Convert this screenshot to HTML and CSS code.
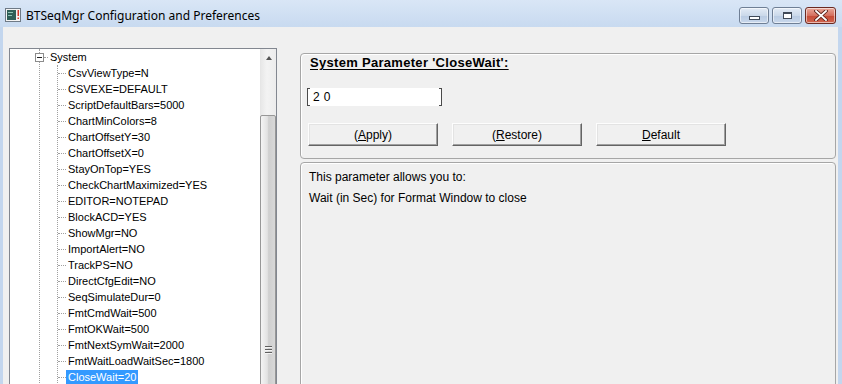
FILE: index.html
```html
<!DOCTYPE html>
<html lang="en">
<head>
  <meta charset="UTF-8" />
  <title>BTSeqMgr Configuration and Preferences</title>
  <link rel="stylesheet" href="styles.css">
</head>
<body>
  <div id="window">
    <div id="titlebar">
      <svg class="app-icon" width="16" height="14" viewBox="0 0 16 14">
        <rect x="0.5" y="0.5" width="15" height="13" fill="#f4f4f4" stroke="#6f7a86"/>
        <rect x="2" y="2" width="9" height="10" fill="#2f5e56"/>
        <rect x="3" y="4" width="5" height="1" fill="#8fc4b4"/>
        <rect x="3" y="7" width="4" height="1" fill="#8fc4b4"/>
        <rect x="12.5" y="2" width="1.5" height="6" fill="#d23a2a"/>
        <rect x="12.5" y="9.5" width="1.5" height="1.5" fill="#d23a2a"/>
      </svg>
      <span class="title">BTSeqMgr Configuration and Preferences</span>
      <div class="caption-buttons">
        <div class="cap-btn min"><span class="glyph-min"></span></div>
        <div class="cap-btn max"><span class="glyph-max"></span></div>
        <div class="cap-btn close">
          <svg width="14" height="11" viewBox="0 0 14 11">
            <path d="M2 1 L12 10 M12 1 L2 10" stroke="#5a2018" stroke-width="3.6" stroke-linecap="square"/>
            <path d="M2 1 L12 10 M12 1 L2 10" stroke="#ffffff" stroke-width="1.8" stroke-linecap="square"/>
          </svg>
        </div>
      </div>
    </div>

    <div id="client">
      <div id="tree-box">
        <div class="tree-area">
          <ul class="tree">
            <li>
              <div class="row"><span class="expander"></span><span class="hline short"></span><span class="label">System</span></div>
              <ul class="children">
                <li class="row"><span class="hline"></span><span class="label">CsvViewType=N</span></li>
                <li class="row"><span class="hline"></span><span class="label">CSVEXE=DEFAULT</span></li>
                <li class="row"><span class="hline"></span><span class="label">ScriptDefaultBars=5000</span></li>
                <li class="row"><span class="hline"></span><span class="label">ChartMinColors=8</span></li>
                <li class="row"><span class="hline"></span><span class="label">ChartOffsetY=30</span></li>
                <li class="row"><span class="hline"></span><span class="label">ChartOffsetX=0</span></li>
                <li class="row"><span class="hline"></span><span class="label">StayOnTop=YES</span></li>
                <li class="row"><span class="hline"></span><span class="label">CheckChartMaximized=YES</span></li>
                <li class="row"><span class="hline"></span><span class="label">EDITOR=NOTEPAD</span></li>
                <li class="row"><span class="hline"></span><span class="label">BlockACD=YES</span></li>
                <li class="row"><span class="hline"></span><span class="label">ShowMgr=NO</span></li>
                <li class="row"><span class="hline"></span><span class="label">ImportAlert=NO</span></li>
                <li class="row"><span class="hline"></span><span class="label">TrackPS=NO</span></li>
                <li class="row"><span class="hline"></span><span class="label">DirectCfgEdit=NO</span></li>
                <li class="row"><span class="hline"></span><span class="label">SeqSimulateDur=0</span></li>
                <li class="row"><span class="hline"></span><span class="label">FmtCmdWait=500</span></li>
                <li class="row"><span class="hline"></span><span class="label">FmtOKWait=500</span></li>
                <li class="row"><span class="hline"></span><span class="label">FmtNextSymWait=2000</span></li>
                <li class="row"><span class="hline"></span><span class="label">FmtWaitLoadWaitSec=1800</span></li>
                <li class="row"><span class="hline"></span><span class="label selected">CloseWait=20</span></li>
              </ul>
            </li>
          </ul>
        </div>
        <div class="vscroll">
          <div class="arrow-up"></div>
          <div class="track"></div>
          <div class="thumb"><span class="grip"></span></div>
        </div>
      </div>

      <div id="right">
        <div class="group param-group">
          <div class="param-title">System Parameter 'CloseWait':</div>
          <div class="value-box">20</div>
          <div class="buttons">
            <button>(<u>A</u>pply)</button>
            <button>(<u>R</u>estore)</button>
            <button><u>D</u>efault</button>
          </div>
        </div>
        <div class="group desc-group">
          <p>This parameter allows you to:</p>
          <p>Wait (in Sec) for Format Window to close</p>
        </div>
      </div>
    </div>
  </div>
</body>
</html>
```

FILE: styles.css
```css
html, body {
  margin: 0;
  padding: 0;
  width: 842px;
  height: 384px;
  overflow: hidden;
}

body {
  font-family: "Liberation Sans", Arial, sans-serif;
  font-size: 12px;
  color: #000;
  background-color: #c3d6ee;
}

#window {
  display: flex;
  flex-direction: column;
  height: 100%;
}

/* title bar */
#titlebar {
  height: 27px;
  display: flex;
  align-items: center;
  padding: 0 6px 0 5px;
  background: linear-gradient(#d9e6f6, #c8daf0);
  flex-shrink: 0;
}

.app-icon {
  margin-top: 3px;
}

.title {
  font-family: "Noto Sans", "Open Sans", sans-serif;
  font-size: 12px;
  color: #000;
  margin-left: 5px;
  margin-top: 3px;
}

.caption-buttons {
  margin-left: auto;
  display: flex;
  gap: 3px;
  align-self: flex-start;
  margin-top: 7px;
}

.cap-btn {
  width: 28px;
  height: 15px;
  border: 1px solid #6f7f95;
  border-radius: 3px;
  background: linear-gradient(#e4ecf6, #cbd9ea 50%, #b9cbe2 51%, #c9d8ec);
  display: flex;
  align-items: center;
  justify-content: center;
  box-shadow: inset 0 0 0 1px rgba(255, 255, 255, 0.55);
}

.cap-btn.close {
  width: 29px;
  border-color: #6b2a22;
  background: linear-gradient(#e9a99b, #d5705f 50%, #c54a36 51%, #d0654f);
}

.glyph-min {
  width: 9px;
  height: 2px;
  margin-top: 5px;
  background: #fff;
  border: 1px solid #404a58;
}

.glyph-max {
  width: 7px;
  height: 4px;
  border: 1px solid #404a58;
  border-top-width: 2px;
  background: #fff;
  box-shadow: inset 0 0 0 1px #fff;
}

/* client area */
#client {
  flex: 1;
  display: flex;
  align-items: flex-start;
  margin: 0 4px 0 3px;
  background-color: #f0f0f0;
  overflow: hidden;
}

#tree-box {
  margin: 21px 0 0 6px;
  width: 266px;
  height: 360px;
  border: 1px solid #828790;
  background: #fff;
  display: flex;
  flex-shrink: 0;
}

.tree-area {
  flex: 1;
  overflow: hidden;
}

.tree, .children {
  list-style: none;
  margin: 0;
  padding: 0;
}

.tree {
  margin-left: 29px;
  border-left: 1px dotted #a0a0a0;
  font-size: 11px;
}

.children {
  margin-left: 17px;
  border-left: 1px dotted #a0a0a0;
}

.row {
  height: 16px;
  display: flex;
  align-items: center;
  white-space: nowrap;
}

.expander {
  width: 7px;
  height: 7px;
  margin-left: -5px;
  border: 1px solid #8c8c8c;
  background: linear-gradient(#222, #222) center / 5px 1px no-repeat, #fff;
}

.hline {
  width: 8px;
  border-top: 1px dotted #a0a0a0;
}

.hline.short {
  width: 4px;
}

.label {
  padding: 0 2px;
  line-height: 15px;
}

.label.selected {
  background: #3399ff;
  color: #fff;
}

/* scrollbar */
.vscroll {
  width: 15px;
  border-left: 1px solid #e6e6e6;
  background: linear-gradient(to right, #e8e8e8, #f3f3f3 40%, #ececec);
  display: flex;
  flex-direction: column;
}

.vscroll > * {
  flex-shrink: 0;
}

.arrow-up {
  height: 17px;
  display: flex;
  justify-content: center;
  padding-top: 7px;
  box-sizing: border-box;
}

.arrow-up::after {
  content: "";
  width: 0;
  height: 0;
  border-left: 3px solid transparent;
  border-right: 3px solid transparent;
  border-bottom: 4px solid #555;
}

.track {
  height: 49px;
}

.thumb {
  height: 468px;
  margin: 0 0 0 -1px;
  border: 1px solid #979797;
  border-radius: 2px;
  background: linear-gradient(to right, #f4f4f4, #e2e2e2 45%, #cfcfcf 55%, #d8d8d8);
  display: flex;
  align-items: center;
  justify-content: center;
}

.grip {
  width: 7px;
  height: 9px;
  background: repeating-linear-gradient(#5f5f5f 0 1px, #f4f4f4 1px 2px, transparent 2px 3px);
}

/* right side */
#right {
  flex: 1;
  margin: 26px 2px 0 23px;
  display: flex;
  flex-direction: column;
  gap: 3px;
}

.group {
  border: 1px solid #a6a6a6;
  border-radius: 4px;
  box-shadow: inset 1px 1px 0 #fff;
  flex-shrink: 0;
}

.param-group {
  padding: 1px 0 0 9px;
  box-sizing: border-box;
  height: 106px;
}

.param-title {
  font-weight: bold;
  font-size: 13px;
  letter-spacing: 0.3px;
  line-height: 16px;
  text-decoration: underline;
  text-underline-offset: 2px;
}

.value-box {
  margin: 17px 0 0 -3px;
  height: 18px;
  padding-left: 5px;
  box-sizing: border-box;
  width: 135px;
  border-left: 1px solid #4a4a4a;
  border-right: 1px solid #4a4a4a;
  background:
    linear-gradient(#4a4a4a, #4a4a4a) left top / 2px 1px no-repeat,
    linear-gradient(#4a4a4a, #4a4a4a) left bottom / 2px 1px no-repeat,
    linear-gradient(#4a4a4a, #4a4a4a) right top / 2px 1px no-repeat,
    linear-gradient(#4a4a4a, #4a4a4a) right bottom / 2px 1px no-repeat,
    #fff;
  line-height: 18px;
  font-size: 12px;
  letter-spacing: 4px;
}

.buttons {
  display: flex;
  gap: 14px;
  margin: 17px 0 0 -2px;
}

button {
  width: 130px;
  height: 23px;
  font-family: "Liberation Sans", Arial, sans-serif;
  font-size: 12px;
  color: #000;
  background: #f0f0f0;
  border: 1px solid;
  border-color: #fdfdfd #646464 #646464 #fdfdfd;
  box-shadow: inset -1px -1px 0 #a0a0a0, inset 1px 1px 0 #e3e3e3;
  padding: 0;
}

.desc-group {
  height: 260px;
  padding: 4px 0 0 8px;
}

.desc-group p {
  margin: 0;
  line-height: 21px;
}
```
